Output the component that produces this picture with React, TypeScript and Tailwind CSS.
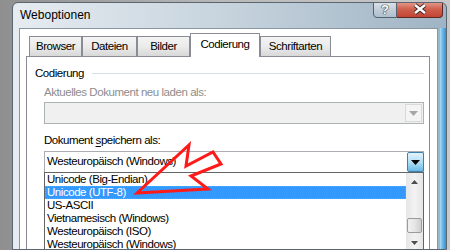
const tabs = [
  { label: "Browser", w: "w-[53px]" },
  { label: "Dateien", w: "w-[55px]" },
  { label: "Bilder", w: "w-[53px]" },
  { label: "Codierung", w: "w-[70px]", active: true },
  { label: "Schriftarten", w: "w-[71px]" },
];

const encodings = [
  "Unicode (Big-Endian)",
  "Unicode (UTF-8)",
  "US-ASCII",
  "Vietnamesisch (Windows)",
  "Westeuropäisch (ISO)",
  "Westeuropäisch (Windows)",
];

function Arrow({ color }: { color: string }) {
  return (
    <svg width="9" height="5" viewBox="0 0 9 5">
      <path d="M0 0 H9 L4.5 5 Z" fill={color} />
    </svg>
  );
}

export default function App() {
  return (
    <div className="relative w-[450px] h-[250px] overflow-hidden bg-gradient-to-r from-[#8f8f8f] via-[#b9b9b9] to-[#c9c9c9] font-['Liberation_Sans',Arial,sans-serif]">
      {/* window */}
      <div className="ml-[12px] mt-[2px] w-[435px] h-[248px] rounded-t-[6px] border border-[#5b6670] bg-gradient-to-r from-[#e6ecf1] via-[#c6d3dd] to-[#9fb4c4] flex flex-col overflow-hidden">
        {/* title bar */}
        <div className="h-[25px] shrink-0 flex items-start">
          <div className="pl-[7px] pt-[5px] text-[12px] text-black leading-[15px]">Weboptionen</div>
          <div className="ml-auto mr-[3px] flex -mt-[3px]">
            <div className="w-[24px] h-[18px] rounded-bl-[4px] border border-[#55626e] bg-gradient-to-b from-[#e2e9ef] via-[#c3cfd9] to-[#aebfcc] flex items-center justify-center text-[13px] font-bold text-white leading-none [text-shadow:0_0_1px_#333,0_0_1px_#333,0_0_1px_#333]">
              ?
            </div>
            <div className="w-[46px] h-[18px] rounded-br-[4px] border border-l-0 border-[#5e2a22] bg-gradient-to-b from-[#e7a597] via-[#d0604f] to-[#c14533] flex items-center justify-center">
              <svg width="16" height="12" viewBox="0 0 16 12">
                <path d="M3 2 L13 10 M13 2 L3 10" stroke="#3b2a28" strokeWidth="4.2" />
                <path d="M3 2 L13 10 M13 2 L3 10" stroke="#ffffff" strokeWidth="2.4" />
              </svg>
            </div>
          </div>
        </div>

        {/* body */}
        <div className="flex flex-1 min-h-0">
          <div className="w-[6px] shrink-0" />
          {/* client */}
          <div className="w-[419px] shrink-0 bg-white border-l border-t border-r border-[#8a97a2] pt-[5px] flex">
            <div className="ml-[6px] w-[404px] flex flex-col text-[11.5px] tracking-[-0.45px] text-black">
              {/* tabs */}
              <div className="flex shrink-0 items-end pl-[3px] h-[22px] relative z-10">
                {tabs.map((t) =>
                  t.active ? (
                    <div
                      key={t.label}
                      className={`${t.w} h-[24px] -mb-[1px] bg-white border border-b-0 border-[#898c95] flex items-center justify-center pb-[2px]`}
                    >
                      {t.label}
                    </div>
                  ) : (
                    <div
                      key={t.label}
                      className={`${t.w} h-[20px] bg-gradient-to-b from-[#f3f3f3] via-[#ebebeb] to-[#d8d8d8] border border-b-0 border-[#898c95] flex items-center justify-center`}
                    >
                      {t.label}
                    </div>
                  )
                )}
              </div>

              {/* panel */}
              <div className="flex-1 bg-white border-l border-t border-r border-[#898c95] pt-[8px]">
                <div className="h-[17px] flex items-center pl-[8px] pr-[5px]">
                  <span>Codierung</span>
                  <div className="flex-1 ml-[8px] h-px bg-[#d5dfe5]" />
                </div>

                <div className="pl-[17px] pr-[5px]">
                  <div className="mt-[3px] h-[14px] leading-[14px] text-[#8d8d8d]">
                    Aktuelles Dokument neu laden als:
                  </div>
                  <div className="mt-[3px] h-[22px] border border-[#adb2b5] bg-[#f0f0f0] flex justify-end p-px">
                    <div className="w-[17px] border border-[#d9d9d9] bg-[#f4f4f4] flex items-center justify-center">
                      <Arrow color="#a6a6a6" />
                    </div>
                  </div>

                  <div className="mt-[9px] h-[14px] leading-[14px]">
                    Dokument <span className="underline underline-offset-2">s</span>peichern als:
                  </div>
                  <div className="mt-[4px] h-[21px] border border-b-0 border-[#abadb3] bg-white flex items-center pl-[2px] pr-0">
                    <span className="flex-1">Westeuropäisch (Windows)</span>
                    <div className="w-[17px] h-[20px] -mr-px rounded-[2px] border border-[#3c7fb1] bg-gradient-to-b from-[#e3f3fc] via-[#b2def6] to-[#6ab9e6] flex items-center justify-center">
                      <Arrow color="#000" />
                    </div>
                  </div>

                  {/* list */}
                  <div className="h-[90px] border border-b-0 border-[#646464] bg-white flex">
                    <div className="flex-1 flex flex-col">
                      {encodings.map((e, i) =>
                        i === 1 ? (
                          <div
                            key={e}
                            className="h-[13px] shrink-0 leading-[11px] bg-[#3399ff] text-white border border-dotted border-[#e0902a] pl-[1px]"
                          >
                            {e}
                          </div>
                        ) : (
                          <div key={e} className="h-[13px] shrink-0 leading-[13px] pl-[2px]">
                            {e}
                          </div>
                        )
                      )}
                    </div>
                    {/* scrollbar */}
                    <div className="w-[17px] bg-gradient-to-r from-[#e6e6e6] via-[#f2f2f2] to-[#e6e6e6] flex flex-col items-center">
                      <div className="mt-[7px]">
                        <svg width="7" height="4" viewBox="0 0 7 4">
                          <path d="M0 4 H7 L3.5 0 Z" fill="#4d4d4d" />
                        </svg>
                      </div>
                      <div className="mt-[34px] w-[15px] h-[15px] rounded-[2px] border border-[#9b9b9b] bg-gradient-to-r from-[#f1f1f1] via-[#e6e6e6] to-[#cfcfcf]" />
                      <div className="mt-[8px]">
                        <svg width="7" height="4" viewBox="0 0 7 4">
                          <path d="M0 0 H7 L3.5 4 Z" fill="#4d4d4d" />
                        </svg>
                      </div>
                    </div>
                  </div>
                </div>
              </div>
            </div>
          </div>
          {/* right frame */}
          <div className="flex-1 flex">
            <div className="w-[2px]" />
            <div className="flex-1 bg-gradient-to-r from-[#a9dcf6] via-[#5fb3e6] to-[#3d8fcf]" />
          </div>
        </div>
      </div>

      {/* red arrow overlay */}
      <svg className="absolute left-0 top-0 pointer-events-none" width="450" height="250">
        <polygon
          points="137,193 189,145 186,166 213,152 221,164 191,176 208,189"
          fill="none"
          stroke="#ff1a1a"
          strokeWidth="3"
          strokeLinejoin="miter"
        />
      </svg>
    </div>
  );
}
